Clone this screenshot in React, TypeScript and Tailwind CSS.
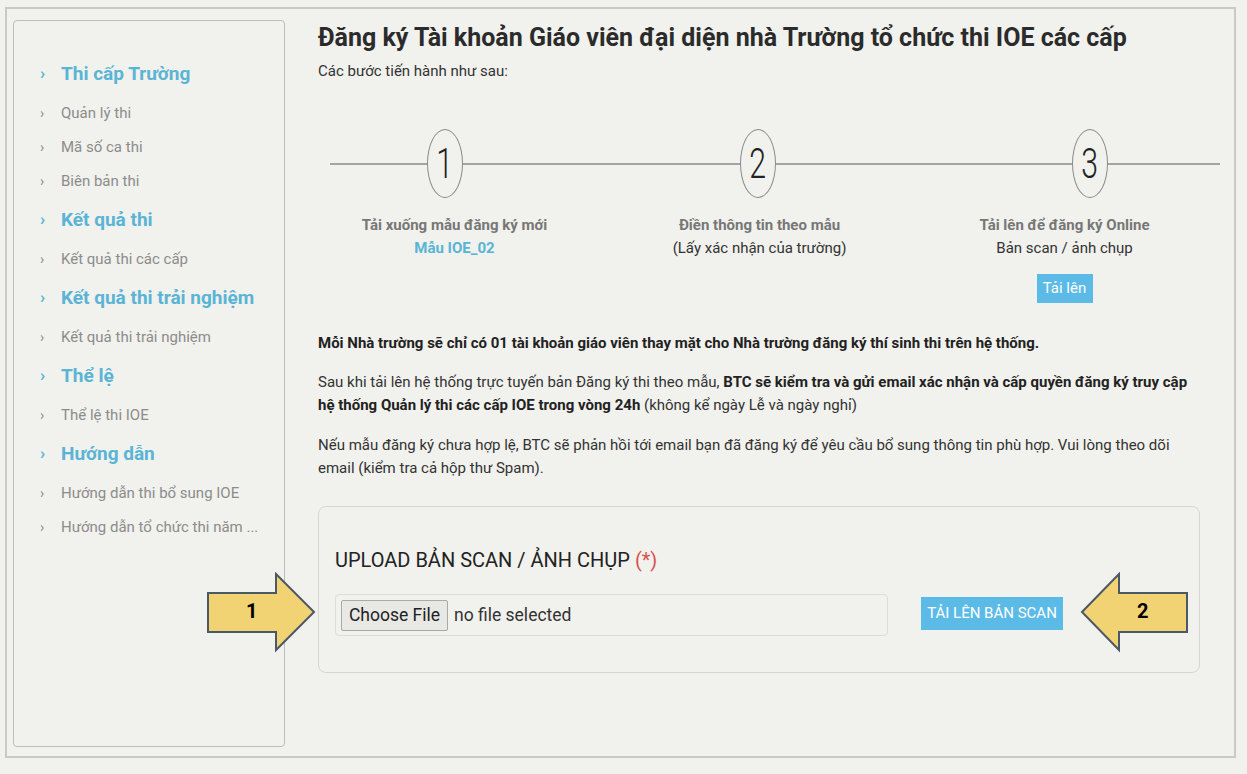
import { Fragment } from "react";

type MenuGroup = { title: string; items: string[] };

const menu: MenuGroup[] = [
  { title: "Thi cấp Trường", items: ["Quản lý thi", "Mã số ca thi", "Biên bản thi"] },
  { title: "Kết quả thi", items: ["Kết quả thi các cấp"] },
  { title: "Kết quả thi trải nghiệm", items: ["Kết quả thi trải nghiệm"] },
  { title: "Thể lệ", items: ["Thể lệ thi IOE"] },
  { title: "Hướng dẫn", items: ["Hướng dẫn thi bổ sung IOE", "Hướng dẫn tổ chức thi năm ..."] },
];

function Sidebar() {
  return (
    <aside className="ml-[6px] mt-[11px] h-[727px] w-[272px] shrink-0 rounded-[4px] border border-[#bdbdb9] pl-[26px] pt-[31px]">
      {menu.map((group) => (
        <Fragment key={group.title}>
          <div className="flex h-[44px] items-center text-[19px] font-bold text-[#5ab4d6]">
            <span className="w-[21px] text-[17px]">›</span>
            <span>{group.title}</span>
          </div>
          {group.items.map((item) => (
            <div key={item} className="flex h-[34px] items-center text-[15px] text-[#8c8c8c]">
              <span className="w-[21px] text-[14px]">›</span>
              <span>{item}</span>
            </div>
          ))}
        </Fragment>
      ))}
    </aside>
  );
}

function StepCircle({ n }: { n: number }) {
  return (
    <div className="flex h-[69px] w-[36px] shrink-0 items-center justify-center rounded-[50%] border border-[#8a8a8a]">
      <span className="scale-x-[0.72] text-[42px] font-light leading-none text-[#222]">{n}</span>
    </div>
  );
}

function Steps() {
  return (
    <>
      <div className="ml-[12px] mt-[48px] flex h-[69px] w-[890px] items-center">
        <div className="h-[2px] w-[97px] bg-[#a3a3a3]" />
        <StepCircle n={1} />
        <div className="h-[2px] w-[277px] bg-[#a3a3a3]" />
        <StepCircle n={2} />
        <div className="h-[2px] w-[297px] bg-[#a3a3a3]" />
        <StepCircle n={3} />
        <div className="h-[2px] w-[112px] bg-[#a3a3a3]" />
      </div>

      <div className="ml-[-16px] mt-[16px] flex text-center text-[15px] leading-[23px]">
        <div className="w-[305px]">
          <div className="font-bold text-[#777]">Tải xuống mẫu đăng ký mới</div>
          <div className="font-bold text-[#5ab4d6]">Mẫu IOE_02</div>
        </div>
        <div className="w-[305px]">
          <div className="font-bold text-[#777]">Điền thông tin theo mẫu</div>
          <div className="text-[#333]">(Lấy xác nhận của trường)</div>
        </div>
        <div className="flex w-[305px] flex-col items-center">
          <div className="font-bold text-[#777]">Tải lên để đăng ký Online</div>
          <div className="text-[#333]">Bản scan / ảnh chụp</div>
          <button className="mt-[14px] h-[29px] w-[56px] bg-[#5bbbe6] text-[15px] text-white">Tải lên</button>
        </div>
      </div>
    </>
  );
}

function UploadBox() {
  return (
    <div className="mt-[26px] h-[167px] w-[882px] rounded-[8px] border border-[#d6d6d2] pl-[16px] pt-[40px]">
      <div className="text-[20px] leading-[26px] text-[#222]">
        UPLOAD BẢN SCAN / ẢNH CHỤP <span className="text-[#d9534f]">(*)</span>
      </div>
      <div className="mt-[21px] flex items-center">
        <div className="flex h-[42px] w-[553px] items-center rounded-[4px] border border-[#dcdcd8] pl-[5px]">
          <div className="flex h-[31px] w-[107px] items-center justify-center rounded-[2px] border border-[#a9a9a9] bg-[#e8e8e5] text-[17.5px] text-[#222]">
            Choose File
          </div>
          <span className="ml-[6px] text-[17.5px] text-[#333]">no file selected</span>
        </div>
        <button className="ml-[33px] mt-[-3px] h-[33px] w-[142px] bg-[#5bbbe6] text-[15px] uppercase text-white">
          Tải lên bản scan
        </button>
      </div>
    </div>
  );
}

// yellow callout arrows drawn over the page
function Arrow({ dir, label, className }: { dir: "right" | "left"; label: string; className: string }) {
  const points = dir === "right" ? "2,21 70,21 70,2 108,40 70,78 70,60 2,60" : "4,40 41,2 41,21 109,21 109,60 41,60 41,78";
  return (
    <div className={`absolute h-[82px] w-[112px] ${className}`}>
      <svg width="112" height="82" viewBox="0 0 112 82">
        <polygon points={points} fill="#f2d374" stroke="#4b5866" strokeWidth="2" strokeLinejoin="miter" />
      </svg>
      <span
        className={`absolute top-[27px] text-[20px] font-bold leading-[24px] text-black ${
          dir === "right" ? "left-[40px]" : "left-[59px]"
        }`}
      >
        {label}
      </span>
    </div>
  );
}

export default function App() {
  return (
    <div className="relative min-h-screen bg-[#f1f1ed] pl-[5px] pt-[7px] font-['Roboto',sans-serif]">
      <div className="flex h-[751px] w-[1231px] border-2 border-[#c9c9c5]">
        <Sidebar />
        <main className="ml-[33px] flex w-[902px] flex-col pt-[13px]">
          <h1 className="text-[25px] font-bold leading-[32px] text-[#2b2b2b]">
            Đăng ký Tài khoản Giáo viên đại diện nhà Trường tổ chức thi IOE các cấp
          </h1>
          <p className="mt-[7px] text-[15px] leading-[20px] text-[#333]">Các bước tiến hành như sau:</p>

          <Steps />

          <div className="mt-[29px] w-[882px] text-[15px] leading-[23px] text-[#333]">
            <p className="font-bold text-[#222]">
              Mỗi Nhà trường sẽ chỉ có 01 tài khoản giáo viên thay mặt cho Nhà trường đăng ký thí sinh thi trên hệ thống.
            </p>
            <p className="mt-[16px]">
              Sau khi tải lên hệ thống trực tuyến bản Đăng ký thi theo mẫu,{" "}
              <b className="text-[#222]">
                BTC sẽ kiểm tra và gửi email xác nhận và cấp quyền đăng ký truy cập hệ thống Quản lý thi các cấp IOE trong
                vòng 24h
              </b>{" "}
              (không kể ngày Lễ và ngày nghỉ)
            </p>
            <p className="mt-[17px]">
              Nếu mẫu đăng ký chưa hợp lệ, BTC sẽ phản hồi tới email bạn đã đăng ký để yêu cầu bổ sung thông tin phù hợp.
              Vui lòng theo dõi email (kiểm tra cả hộp thư Spam).
            </p>
          </div>

          <UploadBox />
        </main>
      </div>

      <Arrow dir="right" label="1" className="left-[206px] top-[572px]" />
      <Arrow dir="left" label="2" className="left-[1078px] top-[572px]" />
    </div>
  );
}
